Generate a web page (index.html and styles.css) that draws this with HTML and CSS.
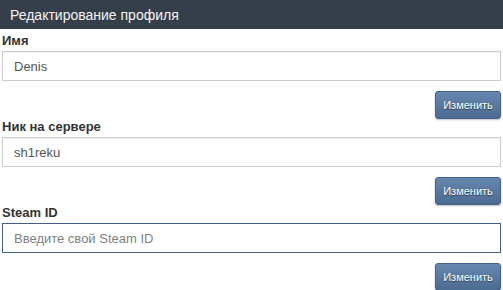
FILE: index.html
```html
<!DOCTYPE html>
<html lang="ru">
<head>
  <meta charset="UTF-8"/>
  <title>Редактирование профиля</title>
  <link rel="stylesheet" href="styles.css">
</head>
<body>

<header>
  <h1>Редактирование профиля</h1>
</header>

<form class="profile">
  <div class="field">
    <label for="name">Имя</label>
    <input id="name" type="text" value="Denis">
    <div class="actions"><button type="button">Изменить</button></div>
  </div>

  <div class="field">
    <label for="nick">Ник на сервере</label>
    <input id="nick" type="text" value="sh1reku">
    <div class="actions"><button type="button">Изменить</button></div>
  </div>

  <div class="field">
    <label for="steam">Steam ID</label>
    <input id="steam" class="active" type="text" placeholder="Введите свой Steam ID" autofocus>
    <div class="actions"><button type="button">Изменить</button></div>
  </div>

  <div class="field">
    <label for="pass">Пароль</label>
    <input id="pass" type="password">
  </div>
</form>

</body>
</html>
```

FILE: styles.css
```css
body {
  font-family: "Liberation Sans", Arial, sans-serif;
  margin: 0;
  padding: 0;
  background-color: #fff;
  color: #333;
}

header {
  height: 29px;
  background-color: #353f49;
  display: flex;
  align-items: center;
  padding: 0 10px;
}

header h1 {
  margin: 0;
  font-size: 14px;
  font-weight: normal;
  color: #f4f4f4;
}

.profile {
  padding: 4px 2px 0;
}

.field label {
  display: block;
  font-size: 13px;
  font-weight: bold;
  line-height: 15px;
  margin-bottom: 3px;
  color: #333;
}

.field input {
  display: block;
  box-sizing: border-box;
  width: 100%;
  height: 30px;
  margin: 0;
  padding: 0 11px;
  font-family: inherit;
  font-size: 13px;
  color: #555;
  border: 1px solid #ccc;
  box-shadow: inset 0 1px 1px rgba(0, 0, 0, 0.06);
  outline: none;
}

.field input::placeholder {
  color: #808080;
}

.field input.active,
.field input:focus {
  border-color: #3f6089;
  box-shadow: none;
}

.actions {
  display: flex;
  justify-content: flex-end;
  padding: 10px 0 0;
  height: 28px;
}

.actions button {
  height: 28px;
  width: 66px;
  padding: 0;
  font-family: inherit;
  font-size: 11px;
  color: #fff;
  text-shadow: 0 1px 1px rgba(0, 0, 0, 0.5);
  background: linear-gradient(#6687ae, #4b6b91);
  border: 1px solid #42628a;
  border-radius: 3px;
  box-shadow: 0 1px 2px rgba(0, 0, 0, 0.25);
  cursor: pointer;
}
```
